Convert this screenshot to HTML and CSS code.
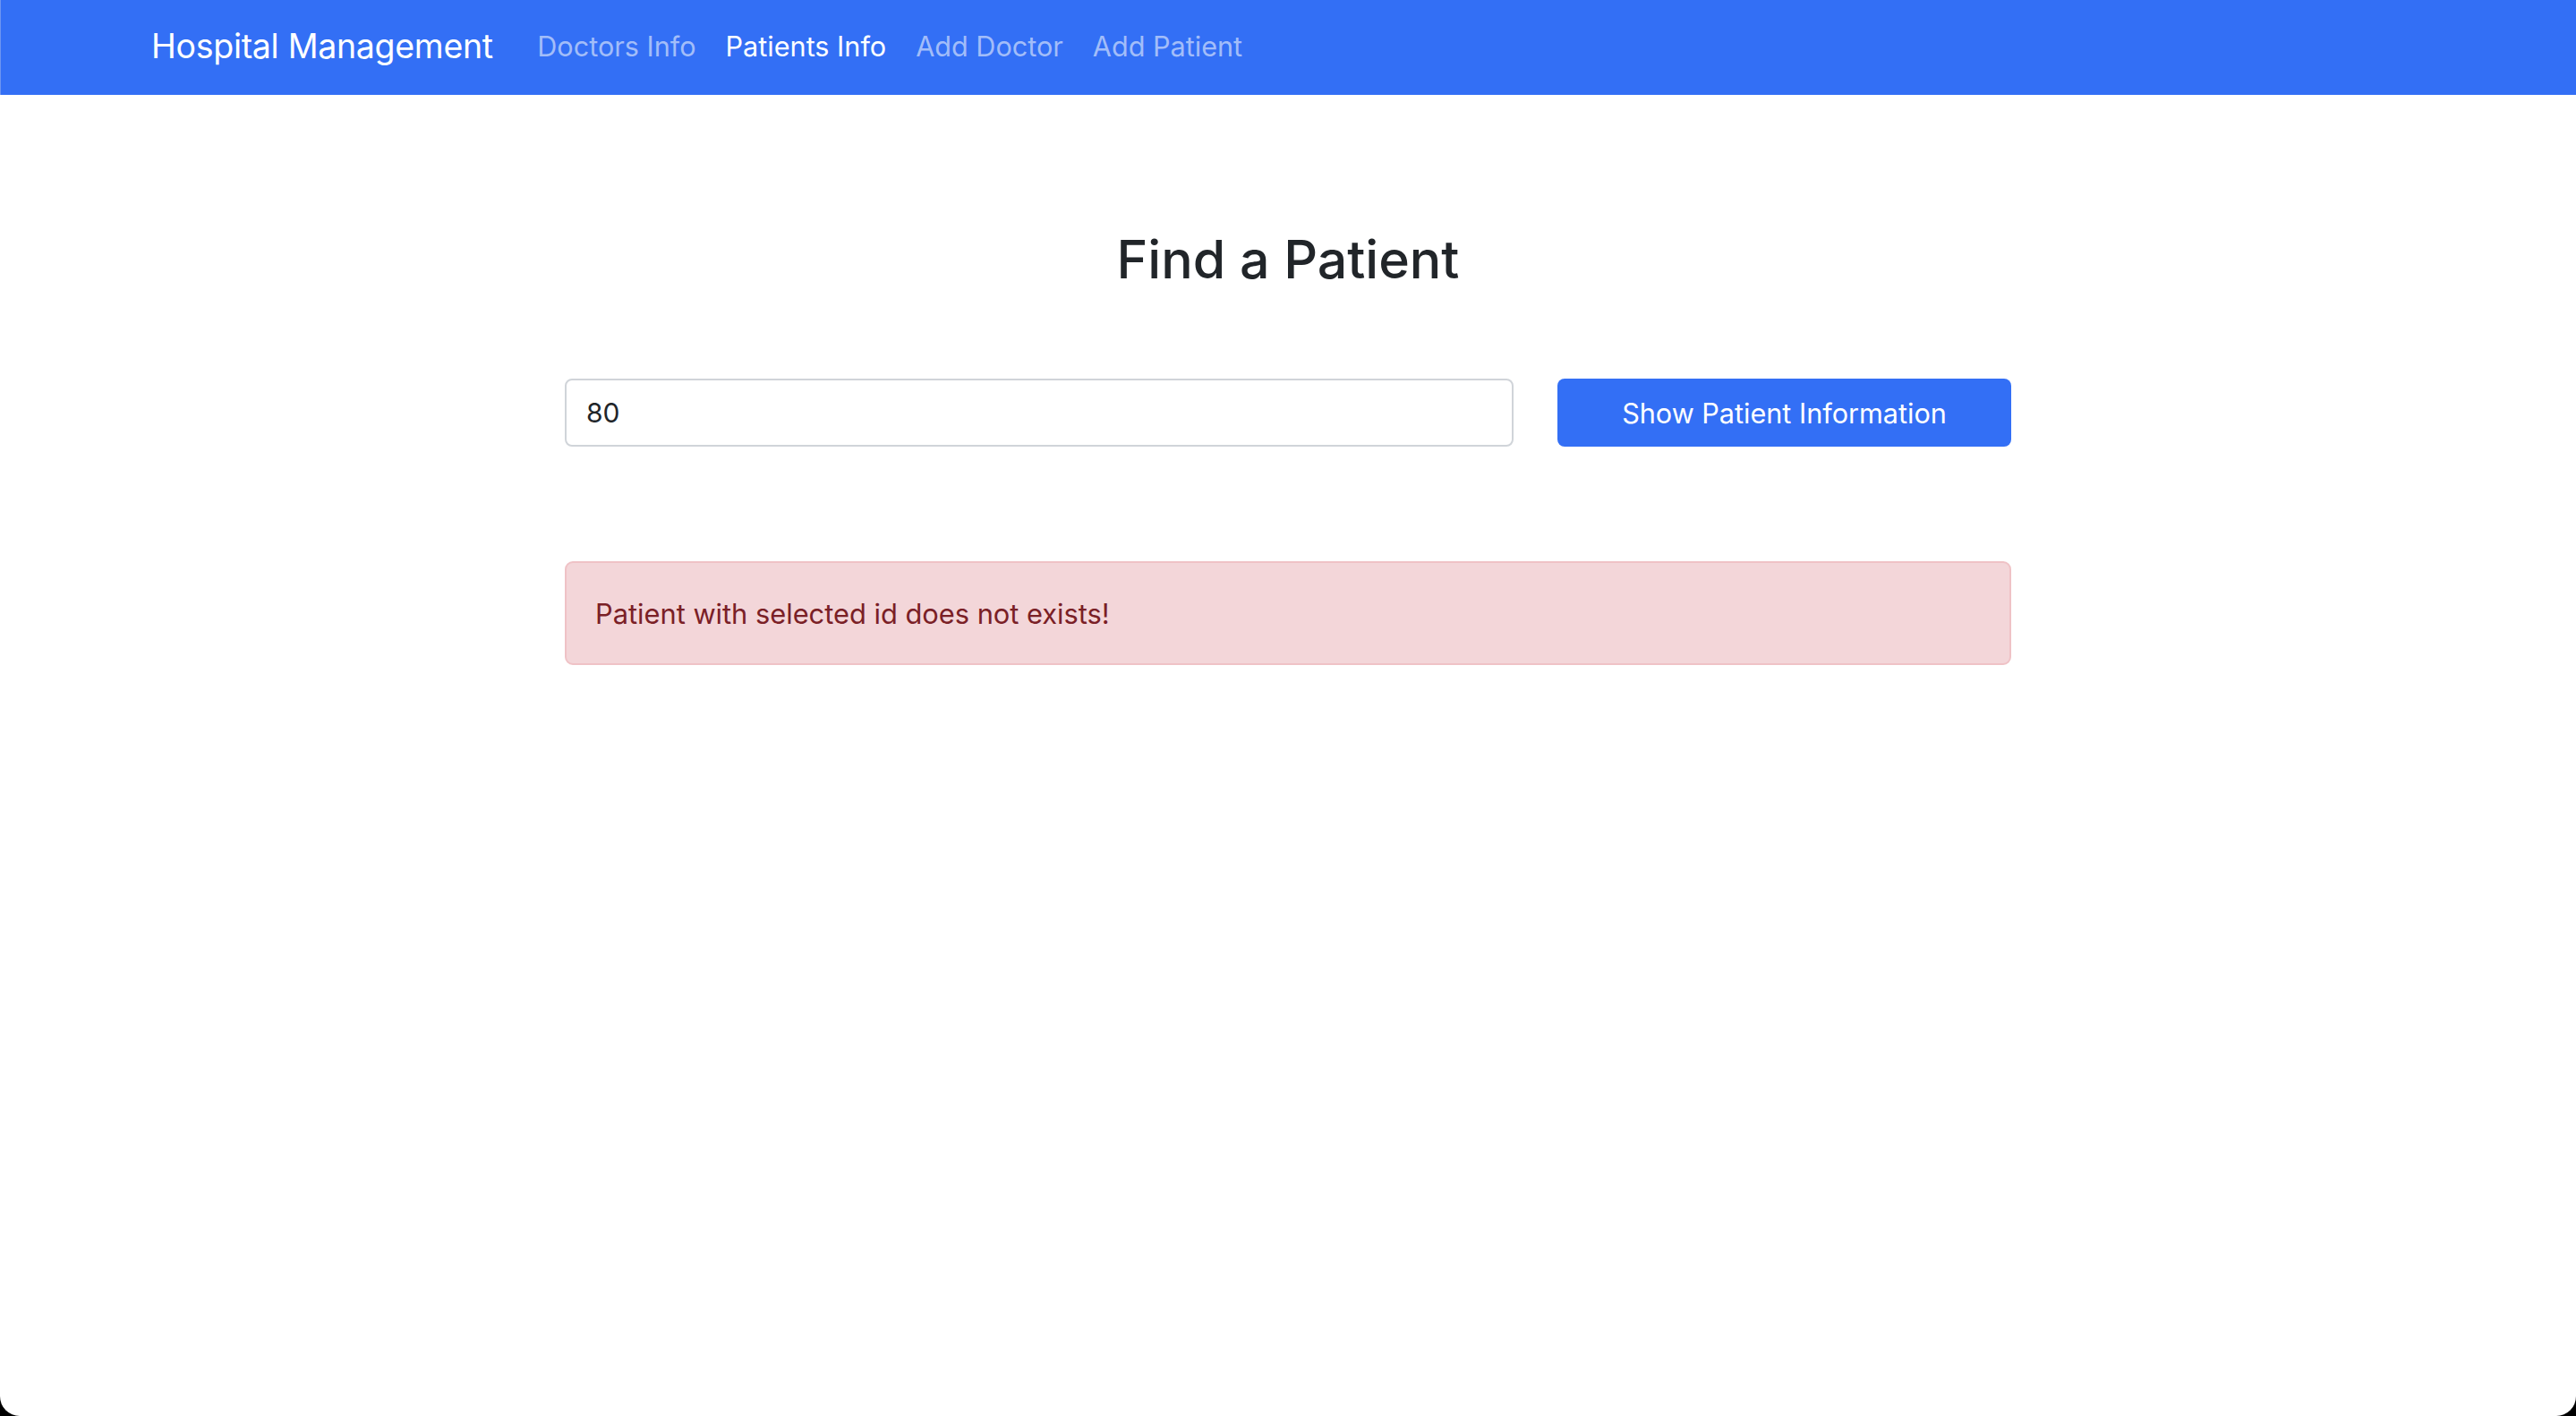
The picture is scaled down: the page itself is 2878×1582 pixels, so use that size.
FILE: index.html
```html
<!DOCTYPE html>
<html lang="en">
<head>
<meta charset="utf-8">
<title>Hospital Management</title>
<link rel="stylesheet" href="styles.css">
</head>
<body>
<div class="window">
  <nav class="navbar">
    <a class="brand" href="#">Hospital Management</a>
    <ul class="nav">
      <li><a class="nav-link" href="#">Doctors Info</a></li>
      <li><a class="nav-link active" href="#">Patients Info</a></li>
      <li><a class="nav-link" href="#">Add Doctor</a></li>
      <li><a class="nav-link" href="#">Add Patient</a></li>
    </ul>
  </nav>
  <main class="content">
    <h1 class="title">Find a Patient</h1>
    <form class="search-row">
      <div class="col-input"><input class="form-control" type="text" value="80"></div>
      <div class="col-button"><button class="btn" type="button">Show Patient Information</button></div>
    </form>
    <div class="alert">Patient with selected id does not exists!</div>
  </main>
</div>
</body>
</html>
```
FILE: styles.css
```css
html {
  background: #000;
  height: 100%;
}
body {
  margin: 0;
  height: 100%;
  font-family: Inter, "Liberation Sans", sans-serif;
  color: #212529;
}
.window {
  height: 100%;
  background: #fff;
  border-radius: 0 0 22px 22px;
  overflow: hidden;
}
.navbar {
  height: 106px;
  box-sizing: border-box;
  background: #336ff5;
  display: flex;
  align-items: center;
  padding-left: 168px;
  padding-bottom: 4px;
  border-left: 1px solid #6c94f2;
}
.brand {
  color: #fff;
  text-decoration: none;
  font-size: 37.5px;
  margin-right: 33px;
  letter-spacing: -0.3px;
}
.nav {
  list-style: none;
  margin: 0;
  padding: 0;
  display: flex;
}
.nav-link {
  display: block;
  padding: 0 16.5px;
  font-size: 30.6px;
  color: #a2bdf9;
  text-decoration: none;
}
.nav-link.active {
  color: #fff;
}
.content {
  width: 1616px;
  margin: 0 auto;
  padding-top: 148px;
}
.title {
  margin: 0;
  text-align: center;
  font-size: 59px;
  font-weight: 500;
  line-height: 72px;
}
.search-row {
  display: flex;
  gap: 49px;
  margin-top: 97px;
}
.col-input {
  width: 1060px;
}
.col-button {
  flex: 1;
}
.form-control {
  display: block;
  width: 100%;
  height: 76px;
  box-sizing: border-box;
  border: 2px solid #d0d4d9;
  border-radius: 8px;
  padding: 0 22px;
  font-family: inherit;
  font-size: 30px;
  color: #212529;
  background: #fff;
}
.btn {
  display: block;
  width: 100%;
  height: 76px;
  border: 0;
  border-radius: 8px;
  background: #336ff5;
  color: #fff;
  font-family: inherit;
  font-size: 30.6px;
}
.alert {
  margin-top: 128px;
  height: 116px;
  box-sizing: border-box;
  display: flex;
  align-items: center;
  padding: 0 32px;
  background: #f3d6d9;
  border: 2px solid #efc2c6;
  border-radius: 9px;
  color: #7a2026;
  font-size: 30.8px;
}
```
